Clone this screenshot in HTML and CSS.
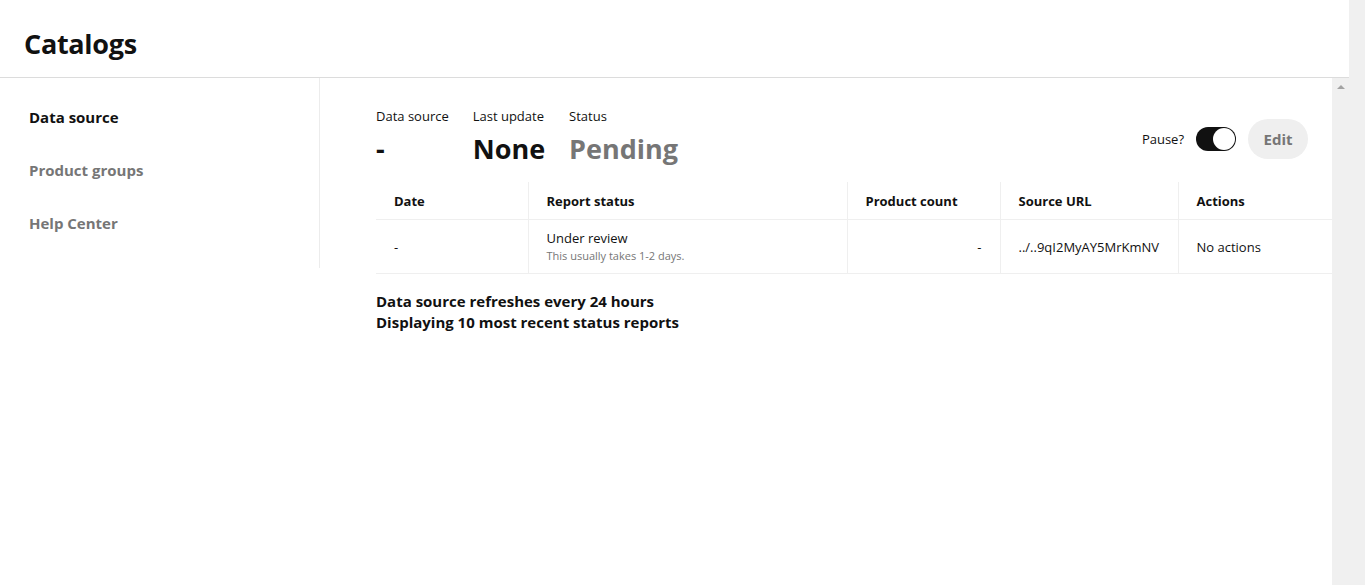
FILE: index.html
```html
<!DOCTYPE html>
<html lang="en">
<head>
    <meta charset="UTF-8">
    <meta name="viewport" content="width=device-width, initial-scale=1.0">
    <title>Catalogs</title>
    <link rel="stylesheet" href="styles.css">
</head>
<body>
    <div class="page">
        <header class="top-bar">
            <h1>Catalogs</h1>
        </header>
        <div class="body-row">
            <nav class="side-nav">
                <a class="nav-item active" href="#">Data source</a>
                <a class="nav-item" href="#">Product groups</a>
                <a class="nav-item" href="#">Help Center</a>
            </nav>
            <main class="main">
                <div class="summary">
                    <div class="stats">
                        <div class="stat">
                            <div class="stat-label">Data source</div>
                            <div class="stat-value">-</div>
                        </div>
                        <div class="stat">
                            <div class="stat-label">Last update</div>
                            <div class="stat-value">None</div>
                        </div>
                        <div class="stat">
                            <div class="stat-label">Status</div>
                            <div class="stat-value muted">Pending</div>
                        </div>
                    </div>
                    <div class="controls">
                        <span class="pause-label">Pause?</span>
                        <span class="toggle"><span class="knob"></span></span>
                        <button class="edit-btn">Edit</button>
                    </div>
                </div>

                <table class="reports">
                    <colgroup>
                        <col class="c-date">
                        <col class="c-status">
                        <col class="c-count">
                        <col class="c-url">
                        <col class="c-actions">
                    </colgroup>
                    <thead>
                        <tr>
                            <th>Date</th>
                            <th>Report status</th>
                            <th>Product count</th>
                            <th>Source URL</th>
                            <th>Actions</th>
                        </tr>
                    </thead>
                    <tbody>
                        <tr>
                            <td>-</td>
                            <td>
                                <div>Under review</div>
                                <div class="sub">This usually takes 1-2 days.</div>
                            </td>
                            <td class="num">-</td>
                            <td>../..9qI2MyAY5MrKmNV</td>
                            <td>No actions</td>
                        </tr>
                    </tbody>
                </table>

                <p class="notes">Data source refreshes every 24 hours<br>Displaying 10 most recent status reports</p>
            </main>
            <div class="inner-scroll"><span class="arrow-up"></span></div>
        </div>
    </div>
    <div class="page-scroll"></div>
</body>
</html>
```

FILE: styles.css
```css
body {
    margin: 0;
    display: flex;
    height: 100vh;
    overflow: hidden;
    font-family: "Open Sans", "Noto Sans", sans-serif;
    color: #111;
    background-color: white;
}
.page {
    flex: 1;
    display: flex;
    flex-direction: column;
    min-width: 0;
}
.page-scroll {
    width: 16px;
    background-color: #f0f0f0;
}
.top-bar {
    height: 67px;
    border-bottom: 1px solid #dcdcdc;
    display: flex;
    align-items: center;
    padding: 10px 0 0 24px;
}
.top-bar h1 {
    margin: 0;
    font-size: 27px;
    font-weight: 700;
    letter-spacing: -0.3px;
}
.body-row {
    flex: 1;
    display: flex;
    min-height: 0;
}
.inner-scroll {
    width: 17px;
    background-color: #f0f0f0;
    display: flex;
    justify-content: center;
    padding-top: 7px;
}
.arrow-up {
    width: 0;
    height: 0;
    border-left: 4px solid transparent;
    border-right: 4px solid transparent;
    border-bottom: 4px solid #a3a3a3;
}
.side-nav {
    width: 319px;
    border-right: 1px solid #ececec;
    align-self: flex-start;
    display: flex;
    flex-direction: column;
    padding: 12px 0 19px 0;
}
.nav-item {
    height: 53px;
    display: flex;
    align-items: center;
    padding-left: 29px;
    font-size: 15px;
    font-weight: 700;
    color: #767676;
    text-decoration: none;
}
.nav-item.active {
    color: #111;
}
.main {
    flex: 1;
    min-width: 0;
    overflow: hidden;
    padding: 28px 0 0 56px;
}
.summary {
    display: flex;
    justify-content: space-between;
    padding-right: 24px;
}
.stats {
    display: flex;
    gap: 24px;
}
.stat-label {
    font-size: 13px;
    line-height: 20px;
}
.stat-value {
    margin-top: 5px;
    font-size: 27px;
    font-weight: 700;
    line-height: 36px;
}
.muted {
    color: #767676;
}
.controls {
    display: flex;
    align-items: center;
    gap: 12px;
    align-self: center;
    margin-top: 5px;
}
.pause-label {
    font-size: 13px;
}
.toggle {
    width: 40px;
    height: 24px;
    border-radius: 12px;
    background-color: #111;
    display: flex;
    align-items: center;
    justify-content: flex-end;
    padding: 0 1px;
    box-sizing: border-box;
}
.knob {
    width: 22px;
    height: 22px;
    border-radius: 50%;
    background-color: white;
}
.edit-btn {
    height: 40px;
    width: 60px;
    border: none;
    border-radius: 20px;
    background-color: #efefef;
    color: #767676;
    font-family: inherit;
    font-size: 15px;
    font-weight: 700;
    cursor: pointer;
}
.reports {
    margin-top: 15px;
    width: 980px;
    border-collapse: collapse;
    table-layout: fixed;
    font-size: 13px;
}
.c-date { width: 152px; }
.c-status { width: 319px; }
.c-count { width: 153px; }
.c-url { width: 178px; }
.reports th,
.reports td {
    text-align: left;
    padding: 0 18px;
    border-left: 1px solid #efefef;
    border-bottom: 1px solid #efefef;
}
.reports th:first-child,
.reports td:first-child {
    border-left: none;
}
.reports th {
    height: 37px;
    font-weight: 700;
}
.reports td {
    height: 52px;
    line-height: 17px;
    padding-top: 1px;
}
.reports td.num {
    text-align: right;
}
.sub {
    font-size: 11px;
    color: #767676;
}
.notes {
    margin: 17px 0 0 0;
    font-size: 15px;
    font-weight: 700;
    line-height: 21px;
}
```
